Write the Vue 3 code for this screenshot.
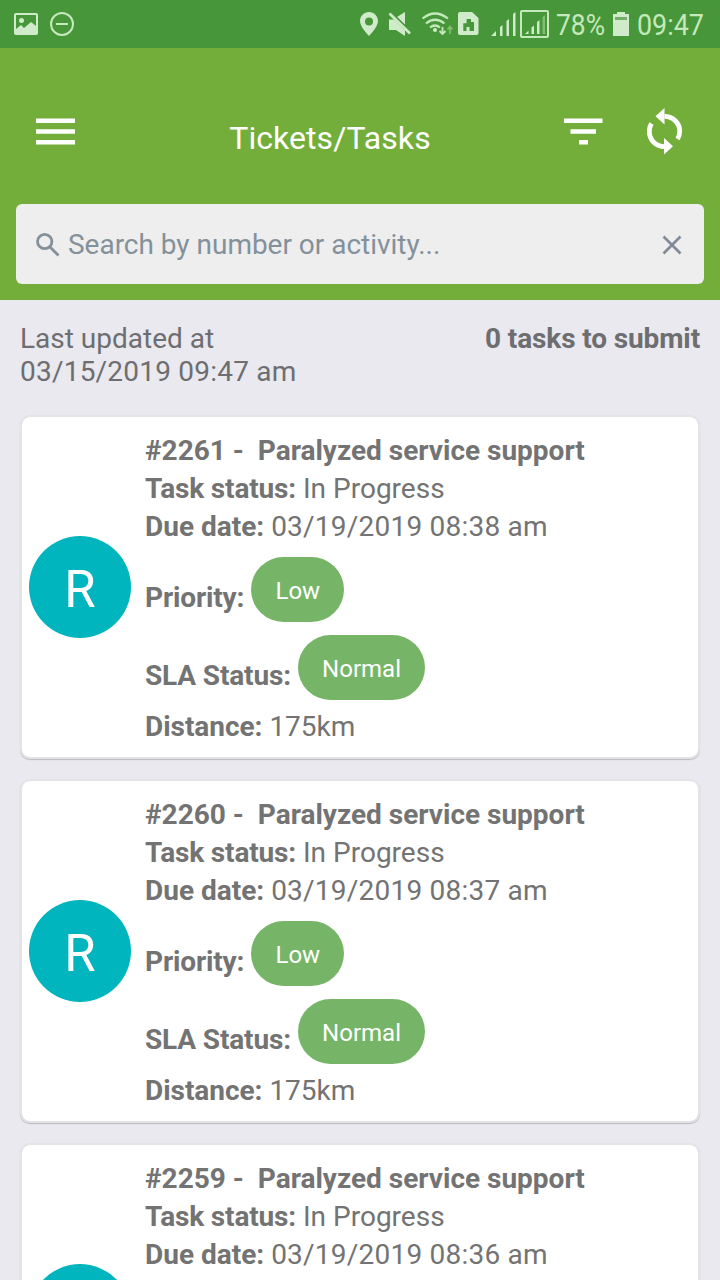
<script setup>
const tickets = [
  { id: 2261, due: '03/19/2019 08:38 am' },
  { id: 2260, due: '03/19/2019 08:37 am' },
  { id: 2259, due: '03/19/2019 08:36 am' }
]
</script>

<template>
  <div class="screen">
    <div class="status">
      <svg class="status-icons" width="720" height="48" viewBox="0 0 720 48" fill="#d0ebca">
        <path fill-rule="evenodd" d="M16 13h20q2 0 2 2v18q0 2-2 2H16q-2 0-2-2V15q0-2 2-2zm0 2v14l5-4 3 3 7-6 5 4V15z" />
        <circle cx="21.5" cy="20.5" r="2.5" />
        <g fill="none" stroke="#c4e9bb" stroke-width="2">
          <circle cx="62" cy="24" r="11" /><path d="M56 24h12" />
        </g>
        <path fill-rule="evenodd" d="M369 12c-5 0-9 4-9 9 0 6 9 15 9 15s9-9 9-15c0-5-4-9-9-9zm0 5.500a4 4 0 1 1 0 8 4 4 0 0 1 0-8z" />
        <path d="M389 19.500h5l11 11V36l-9-6h-7zM397 17l8-5v13z" />
        <path d="M391 12.500l20.500 20" fill="none" stroke="#48963a" stroke-width="2" />
        <path d="M389.500 13.500l20.500 20" fill="none" stroke="#d0ebca" stroke-width="2.600" />
        <g fill="none" stroke="#c4e9bb" stroke-width="2.200">
          <path d="M422.500 18.500q12.500-10 25.500 0M426 23.500q9-7.500 18.500 0M430 27.500q5-4 10 0" />
          <path d="M442.500 27v7M439.500 31l3 3 3-3" stroke-width="1.800" />
          <path d="M450 34v-7M447.500 29.500l2.500-3 2.500 3" stroke="#80be72" stroke-width="1.700" />
        </g>
        <circle cx="435" cy="30" r="2" />
        <path fill-rule="evenodd" d="M460 12h12l6.500 6v15q0 2-2 2H460q-2 0-2-2V14q0-2 2-2zm3.300 11.300v7.700h3.200v-4h3v4h4.500v-9h-3v-3h-4.400v4.300z" />
        <path d="M491 36l5-5v5zM500 27l2.500-2v11H500zM506.500 21l2.500-2v17h-2.500zM513 14l2.500-2v24H513z" />
        <rect x="521" y="11" width="27" height="26" rx="1" fill="none" stroke="#c4e9bb" stroke-width="2" />
        <path d="M525 34l3.500-3.500V34zM531.500 27.500l2.500-2V34h-2.500zM537 22l2.500-2v14H537z" />
        <path d="M542.500 17l2.500-2v19h-2.500z" fill="#80be72" />
        <path d="M617 12h8v2h4v22h-16V14h4z" />
        <path d="M615 17h12v3h-12z" fill="#73ae68" />
        <g font-family="Roboto, sans-serif" font-size="30" fill="#c4e9bb">
          <text x="556" y="35" textLength="49" lengthAdjust="spacingAndGlyphs">78%</text>
          <text x="637" y="35" textLength="67" lengthAdjust="spacingAndGlyphs">09:47</text>
        </g>
      </svg>
    </div>

    <header class="header">
      <div class="toolbar">
        <svg class="bars" width="40" height="28" viewBox="0 0 40 28" fill="#fff">
          <path d="M1 .5h39v4.500H1zM1 11.300h39v4.500H1zM1 22h39v4.500H1z" />
        </svg>
        <h1 class="title">Tickets/Tasks</h1>
        <svg class="bars" width="40" height="28" viewBox="0 0 40 28" fill="#fff">
          <path d="M1 .5h38.500v4.500H1zM7.500 11.300H33v4.500H7.500zM16 22h9v4.500h-9z" />
        </svg>
        <svg width="36" height="48" viewBox="0 0 36 48">
          <path fill="none" stroke="#fff" stroke-width="4.800" d="M17.500 9.300c8.500 0 15.200 6.700 15.200 15 0 3-.8 5.500-2.200 7.700M17.500 39.700c-8.400 0-15.200-6.800-15.200-15.200 0-3 .8-5.600 2.200-7.900" />
          <path fill="#fff" d="M17.500 1v16.500l-9-8.200zM17 31v16.500l9-8.200z" />
        </svg>
      </div>
      <div class="search">
        <svg class="glyph" width="26" height="26" viewBox="0 0 26 26" fill="none" stroke="#84919b" stroke-width="2.800">
          <circle cx="9.700" cy="9.500" r="7.200" /><path d="M15 15l8.500 8.500" />
        </svg>
        <span class="placeholder">Search by number or activity...</span>
        <svg class="glyph" width="20" height="20" viewBox="0 0 20 20" fill="none" stroke="#808b95" stroke-width="2.600">
          <path d="M1.500 1.500l17 17M18.500 1.500l-17 17" />
        </svg>
      </div>
    </header>

    <section class="summary">
      <div>Last updated at<br><span class="date">03/15/2019 09:47 am</span></div>
      <b>0 tasks to submit</b>
    </section>

    <main class="list">
      <article v-for="t in tickets" :key="t.id" class="card">
        <div class="avatar">R</div>
        <div class="details">
          <div class="line"><b>#{{ t.id }} -&nbsp; Paralyzed service support</b></div>
          <div class="line"><b class="label">Task status:</b> In Progress</div>
          <div class="line due"><b>Due date:</b> <span class="date">{{ t.due }}</span></div>
          <div class="pill-row"><b class="label">Priority:</b><span class="pill">Low</span></div>
          <div class="pill-row"><b class="label">SLA Status:</b><span class="pill">Normal</span></div>
          <div class="line distance"><b>Distance:</b> 175km</div>
        </div>
      </article>
    </main>
  </div>
</template>

<style>
body { background: #e9e9ef; overflow: hidden; }
</style>

<style scoped>
.screen { width: 720px; height: 1280px; overflow: hidden; background: #e9e9ef; font-family: Roboto, sans-serif; font-size: 28px; color: #737373; }
.status { height: 48px; background: #48963a; }
.status-icons { display: block; }
.header { height: 252px; box-sizing: border-box; padding: 0 16px; background: #74ae3a; }
.toolbar { height: 156px; display: grid; grid-template-columns: 58px 1fr 83.5px 53.5px; align-items: center; padding: 10px 4px 0 19px; box-sizing: border-box; }
.bars { margin-top: 2px; }
.title { margin: 14px 0 0; padding-left: 4px; text-align: center; color: #fff; font-size: 32px; line-height: 38px; font-weight: 400; letter-spacing: 0.06px; }
.search { height: 80px; box-sizing: border-box; display: flex; align-items: center; padding: 0 22px 0 19px; background: #eee; border-radius: 6px; }
.glyph { margin-top: 2px; }
.placeholder { flex: 1; margin-left: 7px; color: #84919b; letter-spacing: -0.02px; }
.summary { display: flex; justify-content: space-between; padding: 22px 20px 0; height: 115px; box-sizing: border-box; line-height: 33px; color: #6e6e70; }
.summary b { letter-spacing: -0.12px; }
.date { letter-spacing: 0.22px; }
.list { display: flex; flex-direction: column; gap: 20px; padding: 0 20px; }
.card { height: 344px; flex: none; box-sizing: border-box; display: flex; align-items: center; gap: 14px; padding-left: 7px; border: 2px solid #e3e4e7; border-radius: 10px; background: #fff; background-clip: padding-box; box-shadow: 0 1px 1px #b9babf; }
.avatar { width: 102px; height: 102px; border-radius: 50%; background: #00b5bd; color: #fff; font-size: 51px; line-height: 108px; text-align: center; }
.details { align-self: stretch; padding-top: 15px; white-space: nowrap; }
.line { height: 38px; line-height: 38px; }
.label { letter-spacing: -0.15px; }
.due { margin-bottom: 4px; }
.pill-row { display: flex; align-items: center; height: 78px; }
.pill-row b { padding-top: 17px; }
.distance { padding-top: 2px; letter-spacing: -0.03px; }
.pill { margin-left: 7px; height: 65px; line-height: 68px; padding: 0 24.200px; border-radius: 33px; background: #76b568; color: #fff; font-size: 24px; }
</style>
